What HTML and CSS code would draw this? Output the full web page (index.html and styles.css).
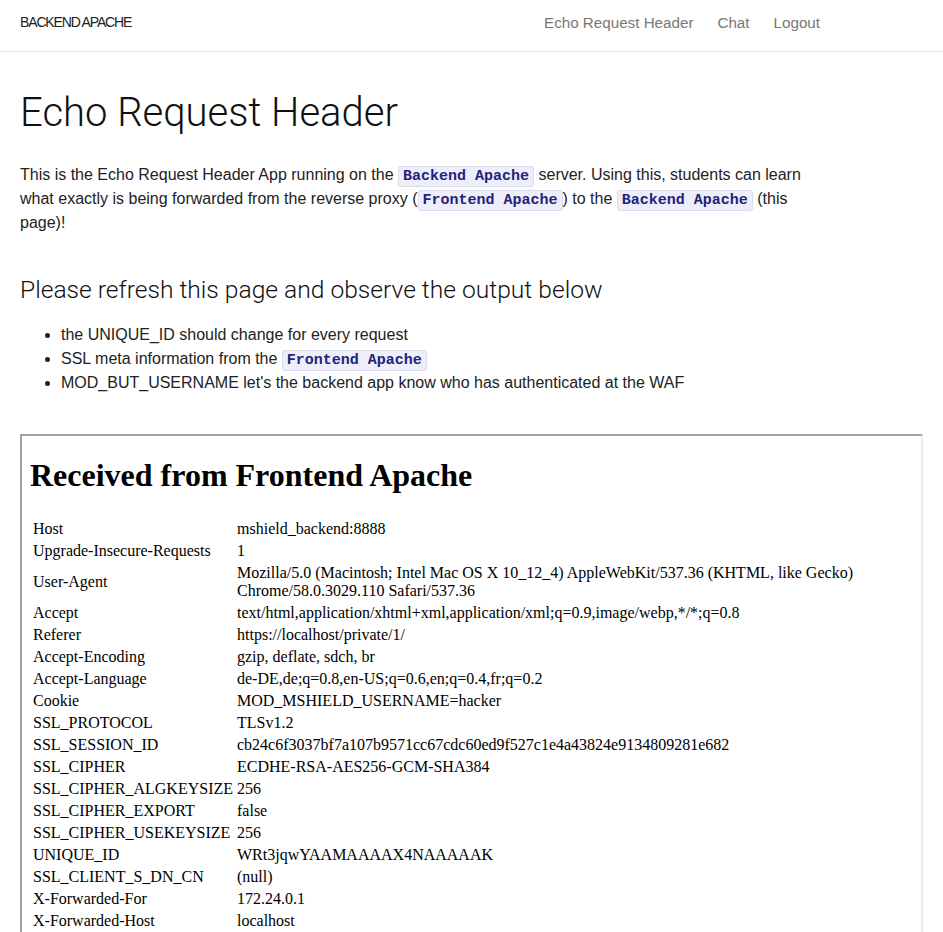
FILE: index.html
```html
<!DOCTYPE html>
<html lang="en">
<head>
<meta charset="utf-8">
<title>Echo Request Header</title>
<link rel="stylesheet" href="styles.css">
</head>
<body>
<nav class="navbar">
  <div class="nav-inner">
    <a class="brand" href="#">BACKEND APACHE</a>
    <ul class="nav-links">
      <li><a href="#">Echo Request Header</a></li>
      <li><a href="#">Chat</a></li>
      <li><a href="#">Logout</a></li>
    </ul>
  </div>
</nav>
<main class="container">
  <h1 class="title">Echo Request Header</h1>
  <p class="intro">This is the Echo Request Header App running on the <code>Backend Apache</code> server. Using this, students can learn what exactly is being forwarded from the reverse proxy (<code>Frontend Apache</code>) to the <code>Backend Apache</code> (this page)!</p>
  <h2 class="subtitle">Please refresh this page and observe the output below</h2>
  <ul class="notes">
    <li>the UNIQUE_ID should change for every request</li>
    <li>SSL meta information from the <code>Frontend Apache</code></li>
    <li>MOD_BUT_USERNAME let's the backend app know who has authenticated at the WAF</li>
  </ul>
  <div class="frame">
    <h1 class="frame-title">Received from Frontend Apache</h1>
    <table class="headers">
      <tr><td>Host</td><td>mshield_backend:8888</td></tr>
      <tr><td>Upgrade-Insecure-Requests</td><td>1</td></tr>
      <tr><td>User-Agent</td><td>Mozilla/5.0 (Macintosh; Intel Mac OS X 10_12_4) AppleWebKit/537.36 (KHTML, like Gecko) Chrome/58.0.3029.110 Safari/537.36</td></tr>
      <tr><td>Accept</td><td>text/html,application/xhtml+xml,application/xml;q=0.9,image/webp,*/*;q=0.8</td></tr>
      <tr><td>Referer</td><td>https://localhost/private/1/</td></tr>
      <tr><td>Accept-Encoding</td><td>gzip, deflate, sdch, br</td></tr>
      <tr><td>Accept-Language</td><td>de-DE,de;q=0.8,en-US;q=0.6,en;q=0.4,fr;q=0.2</td></tr>
      <tr><td>Cookie</td><td>MOD_MSHIELD_USERNAME=hacker</td></tr>
      <tr><td>SSL_PROTOCOL</td><td>TLSv1.2</td></tr>
      <tr><td>SSL_SESSION_ID</td><td>cb24c6f3037bf7a107b9571cc67cdc60ed9f527c1e4a43824e9134809281e682</td></tr>
      <tr><td>SSL_CIPHER</td><td>ECDHE-RSA-AES256-GCM-SHA384</td></tr>
      <tr><td>SSL_CIPHER_ALGKEYSIZE</td><td>256</td></tr>
      <tr><td>SSL_CIPHER_EXPORT</td><td>false</td></tr>
      <tr><td>SSL_CIPHER_USEKEYSIZE</td><td>256</td></tr>
      <tr><td>UNIQUE_ID</td><td>WRt3jqwYAAMAAAAX4NAAAAAK</td></tr>
      <tr><td>SSL_CLIENT_S_DN_CN</td><td>(null)</td></tr>
      <tr><td>X-Forwarded-For</td><td>172.24.0.1</td></tr>
      <tr><td>X-Forwarded-Host</td><td>localhost</td></tr>
    </table>
  </div>
</main>
</body>
</html>
```

FILE: styles.css
```css
html, body {
  margin: 0;
  padding: 0;
  background: #fff;
}

body {
  font-family: "Liberation Sans", Arial, sans-serif;
  font-size: 16px;
  line-height: 1.5;
  color: #222;
}

a {
  text-decoration: none;
}

.navbar {
  height: 51px;
  border-bottom: 1px solid #e5e5e5;
}

.nav-inner {
  max-width: 800px;
  height: 45px;
  padding: 0 20px;
  display: flex;
  align-items: center;
  justify-content: space-between;
}

.brand {
  font-size: 14px;
  letter-spacing: -1.15px;
  color: #222;
}

.nav-links {
  list-style: none;
  margin: 0;
  padding: 0;
  display: flex;
  gap: 24px;
}

.nav-links a {
  color: #777;
  font-size: 15.2px;
}

.container {
  padding: 0 20px;
}

.title {
  font-family: Roboto, "Liberation Sans", sans-serif;
  font-weight: 300;
  font-size: 40px;
  line-height: 48px;
  margin: 37px 0 26px;
  color: #111;
}

.intro {
  max-width: 805px;
  margin: 0 0 38px;
}

code {
  font-family: "Liberation Mono", "Courier New", monospace;
  font-size: 15px;
  line-height: 1;
  font-weight: bold;
  color: #23237a;
  background: #eeeefa;
  border: 1px solid #dcdcec;
  border-radius: 3px;
  padding: 1px 4px;
}

.subtitle {
  font-family: Roboto, "Liberation Sans", sans-serif;
  font-weight: 300;
  font-size: 24.6px;
  line-height: 34px;
  margin: 0 0 16px;
  color: #111;
}

.notes {
  margin: 0 0 39px;
  padding-left: 41px;
}

.frame {
  border: 2px solid;
  border-color: #a0a0a0 #ebebeb #ebebeb #a0a0a0;
  padding: 8px;
  font-family: "Liberation Serif", "Times New Roman", serif;
  color: #000;
  line-height: normal;
}

.frame-title {
  font-size: 32px;
  font-weight: bold;
  margin: 13px 0 23px;
}

.headers {
  border-collapse: separate;
  border-spacing: 2px;
  font-size: 16px;
}

.headers td {
  padding: 1px;
  line-height: 18px;
  vertical-align: middle;
}
```
